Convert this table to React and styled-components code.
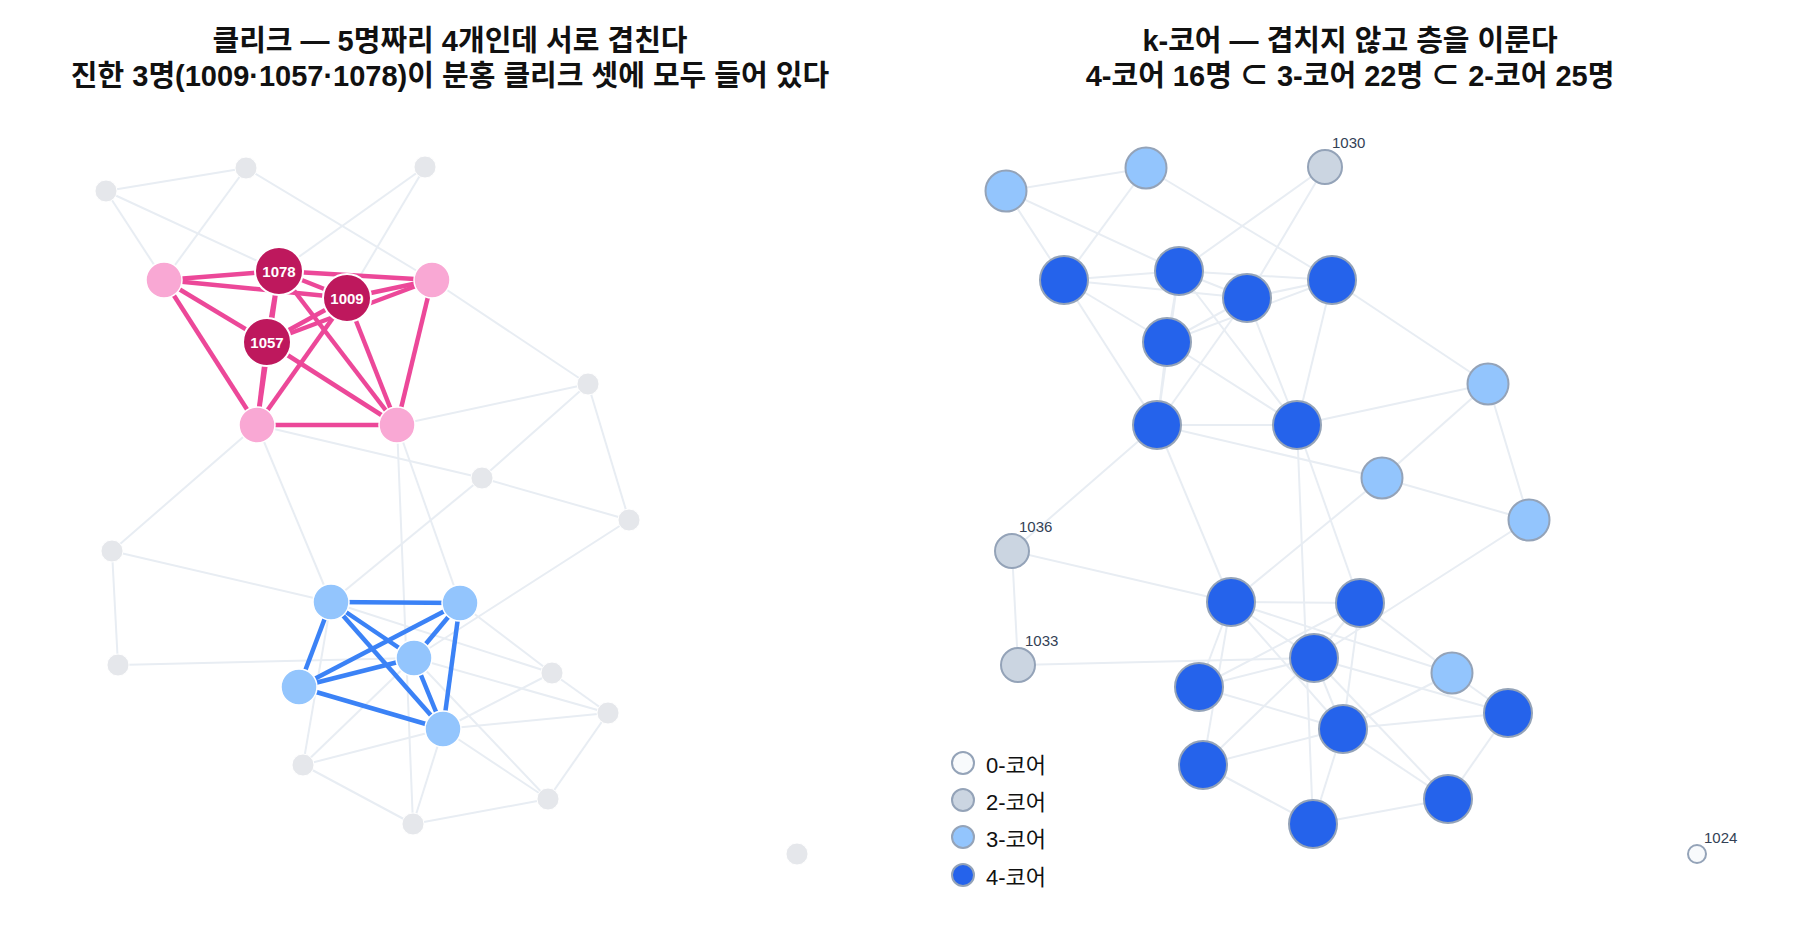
import React from 'react'
import styled, { createGlobalStyle } from 'styled-components'

const GlobalStyle = createGlobalStyle`
  html, body {
    margin: 0;
    padding: 0;
    background: #ffffff;
  }
  body {
    font-family: "Liberation Sans", "Noto Sans CJK KR", sans-serif;
    color: #111111;
  }
`

// node positions are shared by both panels (panel-local x, page y)
const NODES = {
  1: [106, 191], 2: [246, 168], 3: [425, 167], 4: [164, 280],
  5: [279, 271], 6: [347, 298], 7: [432, 280], 8: [267, 342],
  9: [257, 425], 10: [397, 425], 11: [588, 384], 12: [482, 478],
  13: [629, 520], 14: [112, 551], 15: [331, 602], 16: [460, 603],
  17: [414, 658], 18: [299, 687], 19: [552, 673], 20: [118, 665],
  21: [443, 729], 22: [608, 713], 23: [303, 765], 24: [548, 799],
  25: [413, 824], 26: [797, 854],
}

const IDS = { 3: '1030', 5: '1078', 6: '1009', 8: '1057', 14: '1036', 20: '1033', 26: '1024' }

const PINK = [
  [4, 5], [4, 6], [4, 8], [4, 9], [5, 6], [5, 7], [5, 8], [5, 9], [5, 10],
  [6, 7], [6, 8], [6, 9], [6, 10], [7, 8], [7, 10], [8, 9], [8, 10], [9, 10],
]
const BLUE = [
  [15, 16], [15, 17], [15, 18], [15, 21], [16, 17], [16, 18], [16, 21],
  [17, 18], [17, 21], [18, 21],
]
const OTHER = [
  [1, 2], [1, 4], [1, 5], [2, 4], [2, 7], [3, 5], [3, 6], [7, 11],
  [10, 11], [11, 12], [11, 13], [9, 12], [9, 14], [9, 15], [10, 16],
  [10, 25], [12, 13], [12, 15], [13, 17], [14, 15], [14, 20], [20, 17],
  [15, 19], [15, 23], [16, 19], [19, 22], [17, 22], [17, 24], [17, 23],
  [21, 22], [21, 24], [21, 25], [21, 23], [21, 19], [22, 24], [23, 25],
  [24, 25],
]
const ALL = [...OTHER, ...PINK, ...BLUE]

const CORE = {
  0: [26],
  2: [3, 14, 20],
  3: [1, 2, 11, 12, 13, 19],
}
const coreOf = (n) => {
  for (const k of [0, 2, 3]) if (CORE[k].includes(n)) return k
  return 4
}

const coreStyle = {
  0: { fill: '#f8fafc', r: 10 },
  2: { fill: '#cbd5e1', r: 18 },
  3: { fill: '#93c5fd', r: 21.5 },
  4: { fill: '#2563eb', r: 25 },
}

const dark = [5, 6, 8]
const pinkSet = [4, 7, 9, 10]
const blueSet = [15, 16, 17, 18, 21]

const Page = styled.main`
  display: flex;
  width: 1800px;
  height: 950px;
  overflow: hidden;
`

const Panel = styled.section`
  position: relative;
  display: flex;
  flex-direction: column;
  width: 900px;
  flex: none;
`

const Title = styled.h2`
  margin: 0;
  box-sizing: border-box;
  height: 110px;
  padding-top: 24px;
  text-align: center;
  font-family: "Liberation Sans", "Noto Sans CJK KR", sans-serif;
  font-weight: 700;
  font-size: 29px;
  line-height: 35px;
  color: #111111;
  white-space: nowrap;

  span {
    display: block;
  }
`

const Canvas = styled.svg`
  display: block;
  width: 900px;
  height: 840px;
  overflow: visible;
`

const Edge = styled.line`
  stroke: ${(p) => (p.$tone === 'pink' ? '#ec4899' : p.$tone === 'blue' ? '#3b82f6' : '#e8edf3')};
  stroke-width: ${(p) => (p.$tone ? 4.5 : 2)};
  stroke-linecap: butt;
`

const Dot = styled.circle`
  fill: ${(p) => p.$fill};
  stroke: ${(p) => p.$ring};
  stroke-width: ${(p) => p.$ringWidth}px;
`

const NodeTag = styled.text`
  font-family: "Liberation Sans", sans-serif;
  font-size: 15px;
  font-weight: ${(p) => (p.$inside ? 700 : 400)};
  fill: ${(p) => (p.$inside ? '#ffffff' : '#334155')};
`

const Legend = styled.ul`
  position: absolute;
  left: 51px;
  top: 744px;
  margin: 0;
  padding: 0;
  list-style: none;
  display: flex;
  flex-direction: column;
`

const LegendItem = styled.li`
  display: flex;
  align-items: center;
  gap: 11px;
  height: 37.3px;
  font-family: "Liberation Sans", "Noto Sans CJK KR", sans-serif;
  font-size: 22px;
  color: #111111;
`

const Swatch = styled.span`
  width: 24px;
  height: 24px;
  box-sizing: border-box;
  border-radius: 50%;
  border: 2px solid #94a3b8;
  background: ${(p) => p.$fill};
`

const line = ([a, b], tone, key) => {
  const [x1, y1] = NODES[a]
  const [x2, y2] = NODES[b]
  return <Edge key={key} x1={x1} y1={y1} x2={x2} y2={y2} $tone={tone} />
}

const CliqueGraph = () => {
  const ids = Object.keys(NODES).map(Number)
  return (
    <Canvas viewBox="0 110 900 840">
      {OTHER.map((e, i) => line(e, null, 'o' + i))}
      {PINK.map((e, i) => line(e, 'pink', 'p' + i))}
      {BLUE.map((e, i) => line(e, 'blue', 'b' + i))}
      {ids.map((n) => {
        const [x, y] = NODES[n]
        if (dark.includes(n)) {
          return (
            <g key={n}>
              <Dot cx={x} cy={y} r={24} $fill="#be185d" $ring="#ffffff" $ringWidth={2} />
              <NodeTag x={x} y={y + 5.5} textAnchor="middle" $inside>{IDS[n]}</NodeTag>
            </g>
          )
        }
        if (pinkSet.includes(n)) return <Dot key={n} cx={x} cy={y} r={18} $fill="#f9a8d4" $ring="#ffffff" $ringWidth={1.5} />
        if (blueSet.includes(n)) return <Dot key={n} cx={x} cy={y} r={18} $fill="#93c5fd" $ring="#ffffff" $ringWidth={1.5} />
        return <Dot key={n} cx={x} cy={y} r={11} $fill="#e5e7eb" $ring="#ffffff" $ringWidth={1} />
      })}
    </Canvas>
  )
}

const CoreGraph = () => {
  const ids = Object.keys(NODES).map(Number)
  return (
    <Canvas viewBox="0 110 900 840">
      {ALL.map((e, i) => line(e, null, 'a' + i))}
      {ids.map((n) => {
        const [x, y] = NODES[n]
        const s = coreStyle[coreOf(n)]
        return <Dot key={n} cx={x} cy={y} r={s.r - 1} $fill={s.fill} $ring="#94a3b8" $ringWidth={2} />
      })}
      {ids.filter((n) => coreOf(n) < 3).map((n) => {
        const [x, y] = NODES[n]
        const s = coreStyle[coreOf(n)]
        return <NodeTag key={'t' + n} x={x + 7} y={y - s.r - 1.5}>{IDS[n]}</NodeTag>
      })}
    </Canvas>
  )
}

const legend = [
  ['0-코어', '#f8fafc'],
  ['2-코어', '#cbd5e1'],
  ['3-코어', '#93c5fd'],
  ['4-코어', '#2563eb'],
]

const App = () => {
  return (
    <>
      <GlobalStyle />
      <Page>
        <Panel>
          <Title>
            <span>클리크 — 5명짜리 4개인데 서로 겹친다</span>
            <span>진한 3명(1009·1057·1078)이 분홍 클리크 셋에 모두 들어 있다</span>
          </Title>
          <CliqueGraph />
        </Panel>
        <Panel>
          <Title>
            <span>k-코어 — 겹치지 않고 층을 이룬다</span>
            <span>4-코어 16명 ⊂ 3-코어 22명 ⊂ 2-코어 25명</span>
          </Title>
          <CoreGraph />
          <Legend>
            {legend.map(([label, fill]) => (
              <LegendItem key={label}>
                <Swatch $fill={fill} />
                {label}
              </LegendItem>
            ))}
          </Legend>
        </Panel>
      </Page>
    </>
  )
}

export default App
